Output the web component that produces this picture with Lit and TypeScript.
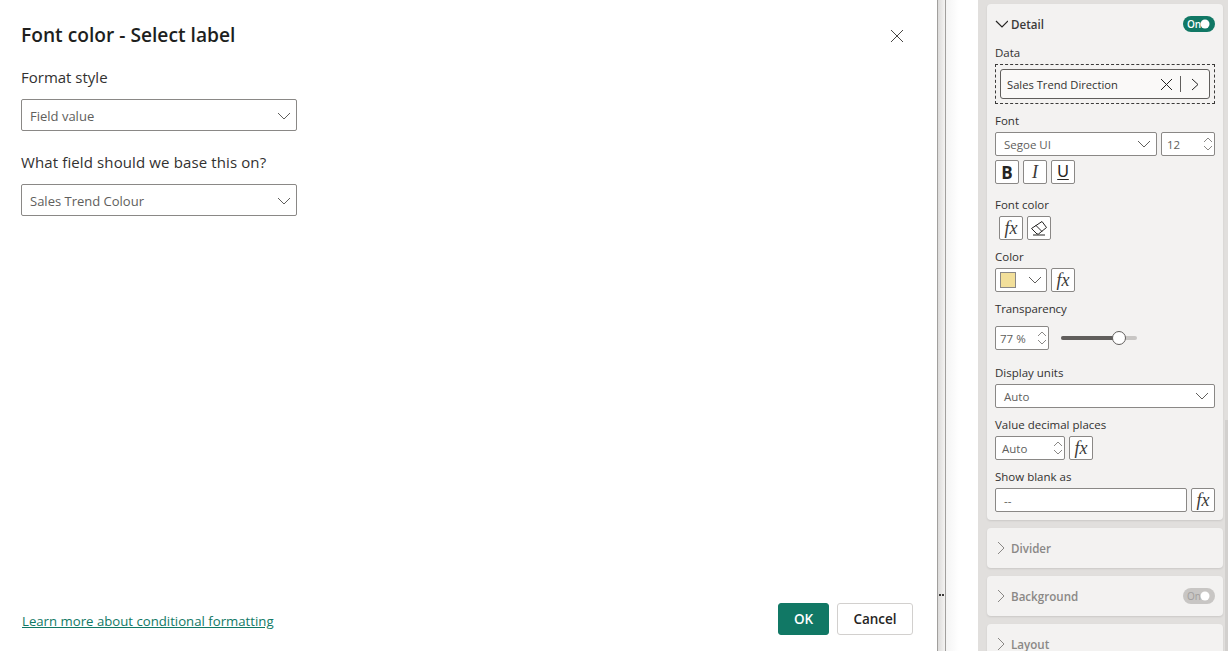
import { LitElement, html, css, svg } from 'lit';
import { customElement } from 'lit/decorators.js';

const chevronDown = html`<svg class="chev" width="14" height="14" viewBox="0 0 14 14"><path d="M1 4l6 6 6-6" fill="none" stroke="#605e5c" stroke-width="1"/></svg>`;

const spinner = html`<span class="spin">
  <svg width="10" height="7" viewBox="0 0 10 7"><path d="M1 6l4-4 4 4" fill="none" stroke="#8a8886"/></svg>
  <svg width="10" height="7" viewBox="0 0 10 7"><path d="M1 1l4 4 4-4" fill="none" stroke="#8a8886"/></svg>
</span>`;

const fx = html`<button class="icon fx">fx</button>`;

const toggleKnob = svg`<circle cx="7" cy="8" r="4.500" fill="#fff"/>`;

@customElement('app-root')
export class AppRoot extends LitElement {
  static styles = css`
    :host {
      display: flex;
      width: 1228px;
      height: 651px;
      overflow: hidden;
      background: #fff;
      font-family: 'Open Sans', 'Noto Sans', sans-serif;
      color: #252423;
    }
    * { box-sizing: border-box; }

    /* dialog */
    .dialog {
      width: 937px;
      flex: none;
      display: flex;
      flex-direction: column;
      padding: 21px 24px 16px 21px;
      background: #fff;
    }
    .dialog-head {
      display: flex;
      justify-content: space-between;
      align-items: center;
      height: 28px;
    }
    .dialog-head h1 {
      margin: 0;
      padding-bottom: 2px;
      font-size: 19.2px;
      font-weight: 600;
      color: #201f1e;
    }
    .close { margin-right: 9px; display: block; margin-top: 2px; }
    .dlg-label {
      font-size: 15px;
      line-height: 20px;
      color: #323130;
      margin: 0 0 12px;
    }
    .dlg-label.first { margin-top: 18px; }
    .dlg-label.next { margin-top: 21px; letter-spacing: 0.12px; }
    .dlg-select {
      width: 276px;
      height: 32px;
      border: 1px solid #8a8886;
      border-radius: 2px;
      display: flex;
      align-items: center;
      justify-content: space-between;
      padding: 1px 5px 0 8px;
      font-size: 13px;
      color: #605e5c;
    }
    .dialog-foot {
      margin-top: auto;
      display: flex;
      align-items: center;
      justify-content: space-between;
      padding-left: 1px;
    }
    .dialog-foot a {
      font-size: 13.2px;
      color: #117865;
      text-decoration: underline;
      padding-top: 4px;
    }
    .actions { display: flex; gap: 8px; }
    .btn {
      height: 32px;
      border-radius: 3px;
      font: inherit;
      font-size: 13.5px;
      font-weight: 600;
      padding: 0;
    }
    .ok { width: 51px; background: #117865; border: 1px solid #117865; color: #fff; }
    .cancel { width: 76px; background: #fff; border: 1px solid #d2d0ce; color: #252423; }

    /* splitter between dialog and pane */
    .split {
      width: 9px;
      flex: none;
      border-left: 1px solid #a19f9d;
      border-right: 1px solid #a19f9d;
      background: linear-gradient(90deg, #dcdbda, #f4f3f2);
      position: relative;
    }
    .grip {
      position: absolute;
      left: 1px;
      top: 594px;
      display: flex;
      gap: 1px;
    }
    .grip i { width: 2px; height: 2px; background: #3b3a39; display: block; }
    .gutter {
      width: 32px;
      flex: none;
      background: linear-gradient(90deg, #f4f4f4, #fff 40%);
    }

    /* format pane */
    .pane {
      flex: 1;
      background: #e1dfdd;
      padding: 4px 5px 0 9px;
      display: flex;
      flex-direction: column;
      gap: 8px;
      position: relative;
      font-size: 12px;
    }
    .scroll {
      position: absolute;
      right: 0;
      top: 420px;
      bottom: 0;
      width: 3px;
      background: #d2d0ce;
    }
    .card {
      background: #f3f2f1;
      border-radius: 4px;
      padding: 0 8px;
      box-shadow: 0 1px 2px rgba(0, 0, 0, 0.1);
      flex: none;
    }
    .card.open { padding-bottom: 8px; }
    .card-head {
      height: 40px;
      display: flex;
      align-items: center;
      gap: 3px;
      font-size: 11.6px;
      font-weight: 600;
      color: #3b3a39;
    }
    .card.off .card-head { color: #8a8886; }
    .card-head .title { flex: 1; }
    .toggle {
      width: 32px;
      height: 16px;
      border-radius: 8px;
      background: #117865;
      color: #fff;
      font-size: 10px;
      font-weight: 600;
      display: flex;
      align-items: center;
      padding-left: 4px;
    }
    .toggle svg { flex: none; margin-left: -3px; }
    .toggle.off { background: #c8c6c4; color: #a19f9d; font-weight: 400; }

    .field { margin-top: 8px; }
    .field.top { margin-top: 0; }
    .field.wide { margin-top: 12px; }
    .field.wider { margin-top: 14px; }
    .lbl {
      display: block;
      height: 16px;
      line-height: 18px;
      font-size: 11.5px;
      color: #323130;
      margin-bottom: 4px;
    }
    .lbl.loose { margin-bottom: 10px; letter-spacing: -0.1px; }
    .row { display: flex; gap: 4px; align-items: center; }
    .row.inset { padding-left: 4px; }
    .row.stack { margin-top: 4px; }
    .box {
      height: 24px;
      background: #fff;
      border: 1px solid #8a8886;
      border-radius: 2px;
      display: flex;
      align-items: center;
      justify-content: space-between;
      padding: 0 5px 0 8px;
      font-size: 11.5px;
      color: #605e5c;
      min-width: 0;
    }
    .grow { flex: 1; }
    .well {
      height: 40px;
      border: 1px dashed #3b3a39;
      padding: 4px;
    }
    .pill {
      height: 30px;
      background: #faf9f8;
      border: 1px solid #605e5c;
      border-radius: 3px;
      display: flex;
      align-items: center;
      padding: 0 10px 0 6px;
      font-size: 11.2px;
      color: #323130;
    }
    .pill .name { flex: 1; }
    .pill .sep { width: 1px; height: 16px; background: #605e5c; margin: 0 10px 0 7px; }
    .pill svg { display: block; }
    .icon {
      width: 24px;
      height: 24px;
      flex: none;
      padding: 0;
      background: #fff;
      border: 1px solid #8a8886;
      border-radius: 2px;
      display: flex;
      align-items: center;
      justify-content: center;
      color: #252423;
      font-size: 14px;
    }
    .fx { font-family: 'Liberation Serif', serif; font-style: italic; font-size: 18px; color: #3b3a39; }
    .b { font-family: 'Open Sans', sans-serif; font-weight: 700; font-size: 17px; }
    .i { font-family: 'Liberation Serif', serif; font-style: italic; font-size: 18px; color: #3b3a39; }
    .u { font-size: 16px; text-decoration: underline; text-underline-offset: 2px; }
    .spin { display: flex; flex-direction: column; gap: 2px; margin-right: -3px; }
    .spin svg { display: block; }
    .swatch-box { width: 52px; padding: 0 4px 0 4px; }
    .swatch { width: 16px; height: 16px; background: #f2df9a; border: 1px solid #8a8886; }
    .num { width: 54px; padding: 0 4px 0 4px; }
    .dec { width: 70px; padding: 0 4px 0 6px; }
    .size { width: 54px; padding: 0 4px 0 5px; }
    .slider {
      position: relative;
      width: 76px;
      height: 4px;
      margin-left: 8px;
      border-radius: 2px;
      background: #c8c6c4;
    }
    .slider .fill { height: 4px; width: 58px; background: #605e5c; border-radius: 2px; }
    .slider .thumb {
      position: absolute;
      left: 51px;
      top: -5px;
      width: 14px;
      height: 14px;
      border-radius: 50%;
      background: #fff;
      border: 1.5px solid #605e5c;
    }
  `;

  private section(name: string, toggle = false) {
    return html`<div class="card off">
      <div class="card-head">
        <svg width="13" height="14" viewBox="0 0 13 14"><path d="M3 1l6 6-6 6" fill="none" stroke="#8a8886"/></svg>
        <span class="title">${name}</span>
        ${toggle
          ? html`<span class="toggle off">On<svg width="16" height="16" viewBox="0 0 16 16">${toggleKnob}</svg></span>`
          : ''}
      </div>
    </div>`;
  }

  render() {
    return html`
      <section class="dialog">
        <div class="dialog-head">
          <h1>Font color - Select label</h1>
          <svg class="close" width="14" height="14" viewBox="0 0 14 14"><path d="M1 1l12 12M13 1L1 13" stroke="#484644" stroke-width="1" fill="none"/></svg>
        </div>
        <p class="dlg-label first">Format style</p>
        <div class="dlg-select">Field value ${chevronDown}</div>
        <p class="dlg-label next">What field should we base this on?</p>
        <div class="dlg-select">Sales Trend Colour ${chevronDown}</div>
        <div class="dialog-foot">
          <a>Learn more about conditional formatting</a>
          <div class="actions">
            <button class="btn ok">OK</button>
            <button class="btn cancel">Cancel</button>
          </div>
        </div>
      </section>

      <div class="split"><div class="grip"><i></i><i></i></div></div>
      <div class="gutter"></div>

      <aside class="pane">
        <div class="scroll"></div>
        <div class="card open">
          <div class="card-head">
            <svg width="13" height="14" viewBox="0 0 13 14"><path d="M1 4l6 6 6-6" fill="none" stroke="#252423" stroke-width="1.2"/></svg>
            <span class="title">Detail</span>
            <span class="toggle">On<svg width="16" height="16" viewBox="0 0 16 16">${toggleKnob}</svg></span>
          </div>

          <div class="field top">
            <span class="lbl">Data</span>
            <div class="well">
              <div class="pill">
                <span class="name">Sales Trend Direction</span>
                <svg width="13" height="13" viewBox="0 0 13 13"><path d="M1 1l11 11M12 1L1 12" stroke="#252423" fill="none"/></svg>
                <span class="sep"></span>
                <svg width="8" height="13" viewBox="0 0 8 13"><path d="M1 1l6 5.5L1 12" stroke="#252423" fill="none"/></svg>
              </div>
            </div>
          </div>

          <div class="field">
            <span class="lbl">Font</span>
            <div class="row">
              <div class="box grow">Segoe UI ${chevronDown}</div>
              <div class="box size">12 ${spinner}</div>
            </div>
            <div class="row stack">
              <button class="icon b">B</button>
              <button class="icon i">I</button>
              <button class="icon u">U</button>
            </div>
          </div>

          <div class="field wide">
            <span class="lbl">Font color</span>
            <div class="row inset">
              ${fx}
              <button class="icon">
                <svg width="18" height="16" viewBox="0 0 18 16"><path d="M12 1.500L16.500 7.500 8.500 14H7L1.500 8.500zM5.500 5l6.500 6.500M3 15h12" fill="none" stroke="#252423"/></svg>
              </button>
            </div>
          </div>

          <div class="field">
            <span class="lbl">Color</span>
            <div class="row">
              <div class="box swatch-box"><span class="swatch"></span>${chevronDown}</div>
              ${fx}
            </div>
          </div>

          <div class="field">
            <span class="lbl loose">Transparency</span>
            <div class="row">
              <div class="box num">77 % ${spinner}</div>
              <div class="slider"><div class="fill"></div><div class="thumb"></div></div>
            </div>
          </div>

          <div class="field wider">
            <span class="lbl">Display units</span>
            <div class="box">Auto ${chevronDown}</div>
          </div>

          <div class="field">
            <span class="lbl">Value decimal places</span>
            <div class="row">
              <div class="box dec">Auto ${spinner}</div>
              ${fx}
            </div>
          </div>

          <div class="field">
            <span class="lbl">Show blank as</span>
            <div class="row">
              <div class="box grow">--</div>
              ${fx}
            </div>
          </div>
        </div>

        ${this.section('Divider')}
        ${this.section('Background', true)}
        ${this.section('Layout')}
      </aside>
    `;
  }
}
